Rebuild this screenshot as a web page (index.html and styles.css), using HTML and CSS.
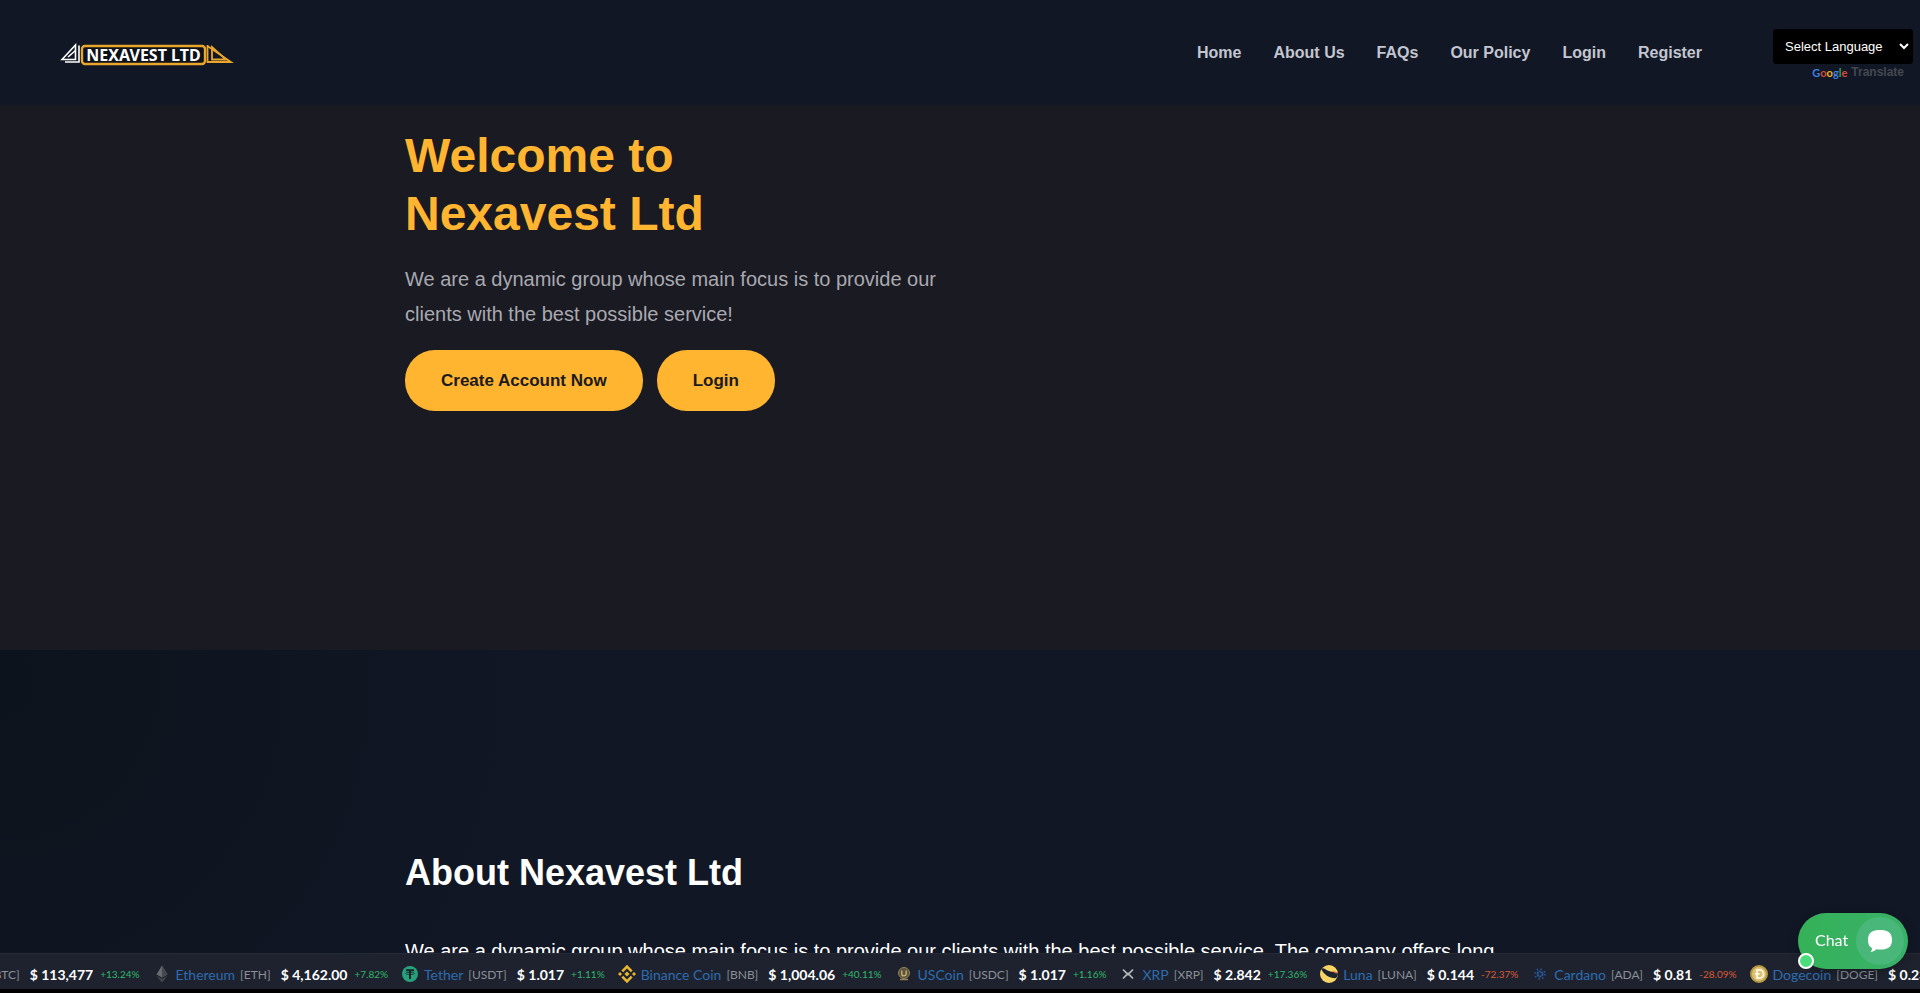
FILE: index.html
```html
<!DOCTYPE html>
<html lang="en">
<head>
<meta charset="utf-8">
<title>Nexavest Ltd</title>
<link rel="stylesheet" href="styles.css">
</head>
<body>
<header class="header">
  <a class="logo" href="#" aria-label="Nexavest Ltd">
    <svg width="176" height="24" viewBox="0 0 176 24">
      <g fill="none" stroke="#fff" stroke-width="1.600">
        <path d="M2 16.500 15.500 2v14.500z"/><path d="M8 14 15.500 7.500"/><path d="M5 19h14V2.500"/>
      </g>
      <rect x="22" y="3" width="123" height="18" rx="3" fill="#0c1018" stroke="#e9a62c" stroke-width="2.400"/>
      <text class="logo-text" x="83.500" y="18" text-anchor="middle">NEXAVEST LTD</text>
      <g fill="none" stroke="#e9a62c" stroke-width="1.800">
        <path d="M147.500 2v17H171L147.500 3"/><path d="M152 4v12.500h14z"/>
      </g>
    </svg>
  </a>
  <nav class="nav">
    <a href="#">Home</a>
    <a href="#">About Us</a>
    <a href="#">FAQs</a>
    <a href="#">Our Policy</a>
    <a href="#">Login</a>
    <a href="#">Register</a>
  </nav>
  <div class="translate">
    <select class="language" aria-label="Select Language"><option>Select Language</option></select>
    <a class="powered" href="#"><span class="google"><span class="g-blue">G</span><span class="g-red">o</span><span class="g-yellow">o</span><span class="g-blue">g</span><span class="g-green">l</span><span class="g-red">e</span></span>Translate</a>
  </div>
</header>

<main>
  <section class="hero">
    <div class="container">
      <h1 class="hero-title">Welcome to<br>Nexavest Ltd</h1>
      <p class="hero-text">We are a dynamic group whose main focus is to provide our clients with the best possible service!</p>
      <div class="actions">
        <a class="button" href="#">Create Account Now</a>
        <a class="button" href="#">Login</a>
      </div>
    </div>
  </section>
  <section class="about">
    <div class="container">
      <h2 class="about-title">About Nexavest Ltd</h2>
      <p class="about-text">We are a dynamic group whose main focus is to provide our clients with the best possible service. The company offers long</p>
    </div>
  </section>
</main>

<div class="ticker">
  <div class="track">
    <div class="coin"><span class="symbol">[BTC]</span><span class="price">$ 113,477</span><span class="change up">+13.24%</span></div>
    <div class="coin">
      <svg class="icon" viewBox="0 0 20 20"><path fill="#686b70" d="M10 1.500 4.500 10.500 10 13.500l5.500-3z"/><path fill="#45484d" d="M10 1.500v12l5.500-3zM4.500 11.800 10 18.500v-3.600zM10 15v3.500l5.500-6.700z"/></svg>
      <a class="name" href="#">Ethereum</a><span class="symbol">[ETH]</span><span class="price">$ 4,162.00</span><span class="change up">+7.82%</span></div>
    <div class="coin">
      <svg class="icon" viewBox="0 0 20 20"><circle cx="10" cy="10" r="8" fill="#26a17b"/><path d="M6 6.200h8M10 6v9" stroke="#17242b" stroke-width="2"/><ellipse cx="10" cy="9.500" rx="4.500" ry="1.100" fill="none" stroke="#17242b" stroke-width=".7"/></svg>
      <a class="name" href="#">Tether</a><span class="symbol">[USDT]</span><span class="price">$ 1.017</span><span class="change up">+1.11%</span></div>
    <div class="coin">
      <svg class="icon" viewBox="0 0 20 20"><g fill="none" stroke="#e8b52f" stroke-width="2.600"><path d="m5.300 7.300L10 2.600l4.700 4.700M5.300 12.700 10 17.400l4.700-4.700"/></g><path fill="#e8b52f" d="m10 7.400 2.600 2.600-2.600 2.600L7.400 10zM3 8l2 2-2 2-2-2zM17 8l2 2-2 2-2-2z"/></svg>
      <a class="name" href="#">Binance Coin</a><span class="symbol">[BNB]</span><span class="price">$ 1,004.06</span><span class="change up">+40.11%</span></div>
    <div class="coin">
      <svg class="icon" viewBox="0 0 20 20"><circle cx="10" cy="9" r="5.500" fill="#5d5338" stroke="#94835a"/><path d="M7.800 6.500v3.200a2.200 2.200 0 0 0 4.400 0V6.500" fill="none" stroke="#cfb980" stroke-width="1.300"/><path d="M6 15.500h8" stroke="#94835a" stroke-width="1.500"/></svg>
      <a class="name" href="#">USCoin</a><span class="symbol">[USDC]</span><span class="price">$ 1.017</span><span class="change up">+1.16%</span></div>
    <div class="coin">
      <svg class="icon" viewBox="0 0 20 20"><path d="M5 5.500 8.300 8.800a2.400 2.400 0 0 0 3.400 0L15 5.500M5 14.500l3.300-3.300a2.400 2.400 0 0 1 3.400 0l3.300 3.300" fill="none" stroke="#b4b7bb" stroke-width="1.700"/></svg>
      <a class="name" href="#">XRP</a><span class="symbol">[XRP]</span><span class="price">$ 2.842</span><span class="change up">+17.36%</span></div>
    <div class="coin">
      <svg class="icon" viewBox="0 0 20 20"><circle cx="10" cy="10" r="9" fill="#f8d565"/><path fill="#1d2430" d="M2.400 5C4 3.200 6 5 8.500 6.500c4 2 8 1 10.300 2.200.4 2-.2 4-1.800 5.400C12 14.800 4.500 11 2.400 5z"/><path fill="#e8703c" d="M13 6.700c2.500.6 4.600.8 5.800 2-.5 1.600-3.800.2-5.800-2z"/></svg>
      <a class="name" href="#">Luna</a><span class="symbol">[LUNA]</span><span class="price">$ 0.144</span><span class="change down">-72.37%</span></div>
    <div class="coin">
      <svg class="icon" viewBox="0 0 20 20"><g fill="none" stroke="#285aa3"><circle cx="10" cy="10" r="2.500" stroke-width="2" stroke-dasharray="2 .618"/><circle cx="10" cy="10" r="5" stroke-width="1.500" stroke-dasharray="1.500 2.427"/></g></svg>
      <a class="name" href="#">Cardano</a><span class="symbol">[ADA]</span><span class="price">$ 0.81</span><span class="change down">-28.09%</span></div>
    <div class="coin">
      <svg class="icon" viewBox="0 0 20 20"><circle cx="10" cy="10" r="8" fill="#d9c27c" stroke="#b6973f" stroke-width="2"/><path d="M8 5.800h2.300a4.200 4.200 0 0 1 0 8.400H8zM6 10h4.500" fill="none" stroke="#fff6d8" stroke-width="1.800"/></svg>
      <a class="name" href="#">Dogecoin</a><span class="symbol">[DOGE]</span><span class="price">$ 0.235</span></div>
  </div>
</div>

<button class="chat" type="button">
  <span class="chat-label">Chat</span>
  <span class="chat-bubble"><svg width="26" height="24" viewBox="0 0 26 24"><path fill="#fff" d="M13 1C20 1 25 3 25 11s-5 9.500-12 9.500c-1.500 0-2.600 0-3.700-.3C7.500 22 5.500 23 3.500 23c1-1 1.500-2.300 1.500-4C2 17.500 1 15 1 11 1 3 6 1 13 1z"/></svg></span>
  <span class="chat-status"></span>
</button>
</body>
</html>
```
FILE: styles.css
```css
* { box-sizing: border-box; }

body {
  margin: 0;
  height: 100vh;
  overflow: hidden;
  background: #111725;
  color: #fff;
  font-family: "Liberation Sans", Arial, sans-serif;
}

a { color: inherit; text-decoration: none; }
h1, h2, p { margin: 0; }

.header {
  display: flex;
  align-items: center;
  height: 105px;
  padding: 0 7px 0 60px;
  background: #111725;
}

.logo { padding-top: 4px; }
.logo svg { display: block; }
.logo-text { fill: #fff; font: bold 16px "Noto Sans", sans-serif; }

.nav {
  display: flex;
  gap: 32px;
  margin-left: auto;
  color: #c3c6d0;
  font-size: 16px;
  font-weight: bold;
}

.translate {
  display: flex;
  flex-direction: column;
  align-items: flex-end;
  width: 140px;
  margin-left: 71px;
  padding-top: 4px;
}

.language {
  width: 100%;
  height: 35px;
  padding: 8px 7px;
  border: 1px solid #000;
  border-radius: 3px;
  background: #000;
  color: #fff;
  font: 13px "Liberation Sans", Arial, sans-serif;
}

.powered {
  display: flex;
  align-items: center;
  gap: 4px;
  height: 17px;
  padding-right: 9px;
  color: #444851;
  font-size: 12px;
  font-weight: bold;
}

.google { font: bold 11px Lato, sans-serif; }
.g-blue { color: #3f7fe0; }
.g-red { color: #d8483c; }
.g-yellow { color: #e8b418; }
.g-green { color: #36a257; }

.container {
  width: 1110px;
  max-width: 100%;
  margin: 0 auto;
}

.hero {
  padding: 22px 0 239px;
  background: #1a1a23;
}

.hero-title {
  color: #ffb52f;
  font-size: 48px;
  line-height: 58px;
}

.hero-text {
  max-width: 545px;
  margin-top: 19px;
  color: #a9a9b0;
  font-size: 20px;
  line-height: 35px;
}

.actions {
  display: flex;
  gap: 14px;
  margin-top: 18px;
}

.button {
  padding: 0 36px;
  border-radius: 30px;
  background: #ffb52f;
  color: #1a1a1f;
  font-size: 17px;
  font-weight: bold;
  line-height: 61px;
}

.about {
  min-height: 344px;
  padding-top: 200px;
  background: radial-gradient(circle at 0 10%, #0d131c 0, #0e1520 220px, #111725 560px);
}

.about-title {
  font-size: 36px;
  line-height: 46px;
}

.about-text {
  margin-top: 38px;
  font-size: 20px;
  line-height: 35px;
}

.ticker {
  position: fixed;
  right: 0;
  bottom: 0;
  left: 0;
  overflow: hidden;
  border-top: 1px solid #252a35;
  border-bottom: 4px solid #000;
  background: #1d222e;
  font-family: Lato, sans-serif;
}

.track {
  display: flex;
  gap: 12px;
  width: max-content;
  margin-left: -10px;
}

.coin {
  display: flex;
  align-items: center;
  height: 35px;
  padding-top: 5px;
  white-space: nowrap;
}

.icon { width: 20px; height: 20px; margin-right: 4px; }
.name { margin-right: 5px; color: #2e6cb0; font-size: 14px; }
.symbol { margin-right: 10px; color: #8b8f96; font-size: 12px; }
.price { margin-right: 7px; font-size: 14px; font-weight: bold; }
.change { font-size: 10px; }
.up { color: #2fb868; }
.down { color: #db5a32; }

.chat {
  position: fixed;
  right: 12px;
  bottom: 24px;
  display: flex;
  align-items: center;
  justify-content: space-between;
  width: 110px;
  height: 56px;
  padding: 0 4px 0 17px;
  border: 0;
  border-radius: 28px;
  background: linear-gradient(100deg, #35b158, #39b169);
  box-shadow: 0 2px 10px rgba(0, 0, 0, 0.3);
  color: #fff;
  font: 16px Lato, sans-serif;
}

.chat-label { padding-bottom: 3px; }

.chat-bubble {
  display: grid;
  place-items: center;
  width: 48px;
  height: 48px;
  border-radius: 50%;
  background: #4ab77a;
}

.chat-status {
  position: absolute;
  bottom: 0;
  left: 0;
  width: 16px;
  height: 16px;
  border: 2px solid #fff;
  border-radius: 50%;
  background: #4bdc7c;
}
```
